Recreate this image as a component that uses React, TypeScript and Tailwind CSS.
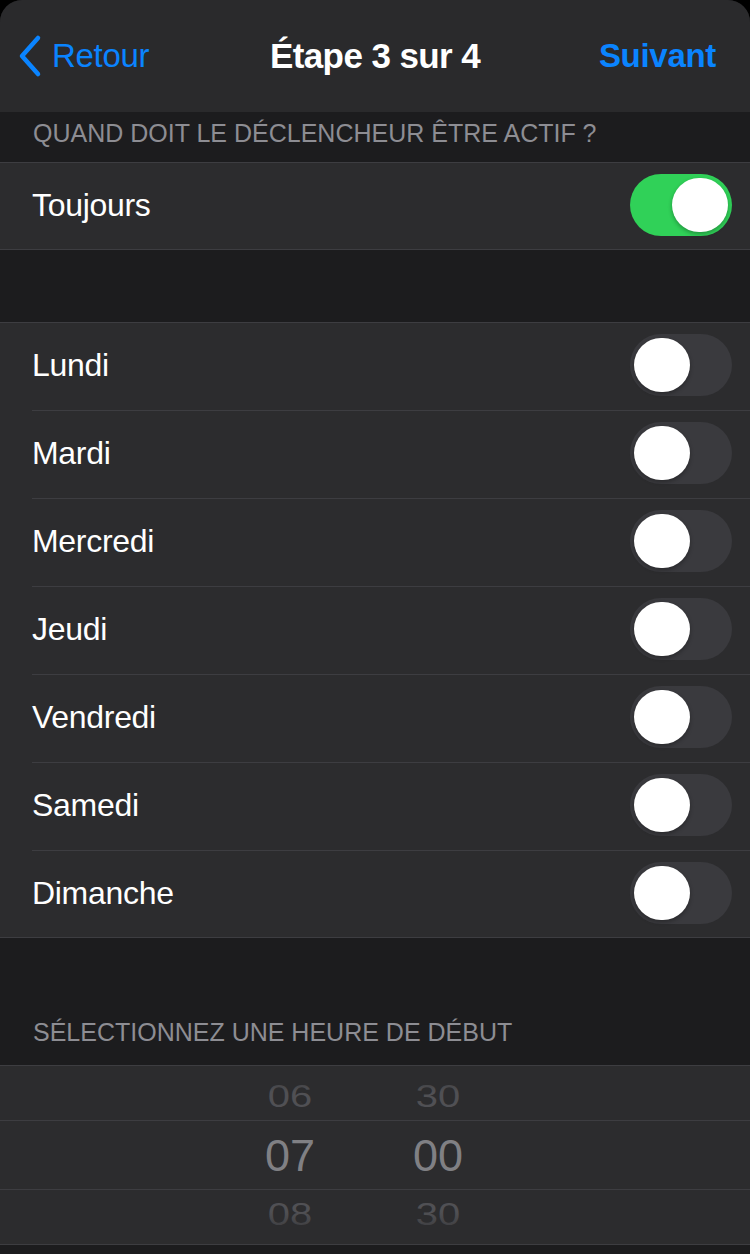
import React from "react";

const font = { fontFamily: '"Liberation Sans", Arial, sans-serif' };

function Toggle({ on }: { on: boolean }) {
  return (
    <div
      className={`w-[102px] h-[62px] rounded-full flex items-center px-[4px] ${
        on ? "bg-[#30d158] justify-end" : "bg-[#3a3a3e] justify-start"
      }`}
    >
      <div className="w-[56px] h-[54px] rounded-full bg-white shadow-[0_2px_4px_rgba(0,0,0,0.3)]" />
    </div>
  );
}

function Row({ label, on, last }: { label: string; on: boolean; last?: boolean }) {
  return (
    <div className="pl-[32px] bg-[#2c2c2e]">
      <div
        className={`flex items-center justify-between pr-[18px] pb-[3px] ${
          last ? "h-[86px]" : "h-[88px] border-b border-[#3d3d41]"
        }`}
      >
        <span className="text-[32px] text-white tracking-[-0.3px]">{label}</span>
        <Toggle on={on} />
      </div>
    </div>
  );
}

export default function App() {
  const days = ["Lundi", "Mardi", "Mercredi", "Jeudi", "Vendredi", "Samedi", "Dimanche"];
  return (
    <div className="w-[750px] h-[1254px] bg-black overflow-hidden" style={font}>
      <div className="h-full bg-[#1c1c1e] rounded-t-[22px] overflow-hidden flex flex-col">
        {/* Nav */}
        <div className="h-[112px] bg-[#2a2a2c] flex items-center justify-between pl-[16px] pr-[34px] relative shrink-0">
          <div className="flex items-center gap-[8px] text-[#0a84ff]">
            <svg width="28" height="44" viewBox="0 0 28 44" fill="none">
              <path d="M22 4 L6 22 L22 40" stroke="#0a84ff" strokeWidth="4.5" strokeLinecap="round" strokeLinejoin="round" />
            </svg>
            <span className="text-[33px] tracking-[-0.3px]">Retour</span>
          </div>
          <div className="absolute left-0 right-0 text-center pointer-events-none">
            <span className="text-[35px] font-bold text-white tracking-[-0.6px]">Étape 3 sur 4</span>
          </div>
          <span className="text-[33px] font-bold text-[#0a84ff] tracking-[-0.3px]">Suivant</span>
        </div>

        {/* Header 1 */}
        <div className="h-[50px] flex items-center px-[33px] pb-[6px] shrink-0">
          <span className="text-[25px] text-[#8d8d93] tracking-[0px]">QUAND DOIT LE DÉCLENCHEUR ÊTRE ACTIF ?</span>
        </div>

        <div className="border-y border-[#3d3d41] shrink-0">
          <Row label="Toujours" on last />
        </div>

        <div className="h-[72px] shrink-0" />

        <div className="border-y border-[#3d3d41] shrink-0">
          {days.map((d, i) => (
            <Row key={d} label={d} on={false} last={i === days.length - 1} />
          ))}
        </div>

        {/* Header 2 */}
        <div className="h-[127px] flex items-end px-[33px] pb-[14px] shrink-0">
          <span className="text-[25px] text-[#8d8d93] tracking-[0px]">SÉLECTIONNEZ UNE HEURE DE DÉBUT</span>
        </div>

        {/* Picker */}
        <div className="bg-[#2c2c2e] border-y border-[#3d3d41] h-[180px] flex flex-col shrink-0">
          <div className="h-[54px] overflow-hidden flex items-end justify-center pr-[22px] relative">
            <div className="flex gap-[96px] text-[40px] text-[#505054] leading-none -translate-y-[8px] scale-y-[0.8] origin-bottom">
              <span className="w-[52px] text-center">06</span>
              <span className="w-[52px] text-center">30</span>
            </div>
            <div className="absolute inset-x-0 top-0 h-[26px] bg-gradient-to-b from-[#2c2c2e] to-transparent" />
          </div>
          <div className="h-[70px] border-y border-[#3d3d41] flex items-center justify-center pr-[22px]">
            <div className="flex gap-[96px] text-[45px] text-[#808084] leading-none">
              <span className="w-[52px] text-center">07</span>
              <span className="w-[52px] text-center">00</span>
            </div>
          </div>
          <div className="flex-1 overflow-hidden flex items-start justify-center pr-[22px] relative">
            <div className="flex gap-[96px] text-[40px] text-[#505054] leading-none pt-[10px] scale-y-[0.8] origin-top">
              <span className="w-[52px] text-center">08</span>
              <span className="w-[52px] text-center">30</span>
            </div>
            <div className="absolute inset-x-0 bottom-0 h-[32px] bg-gradient-to-t from-[#2c2c2e] to-transparent" />
          </div>
        </div>
      </div>
    </div>
  );
}
